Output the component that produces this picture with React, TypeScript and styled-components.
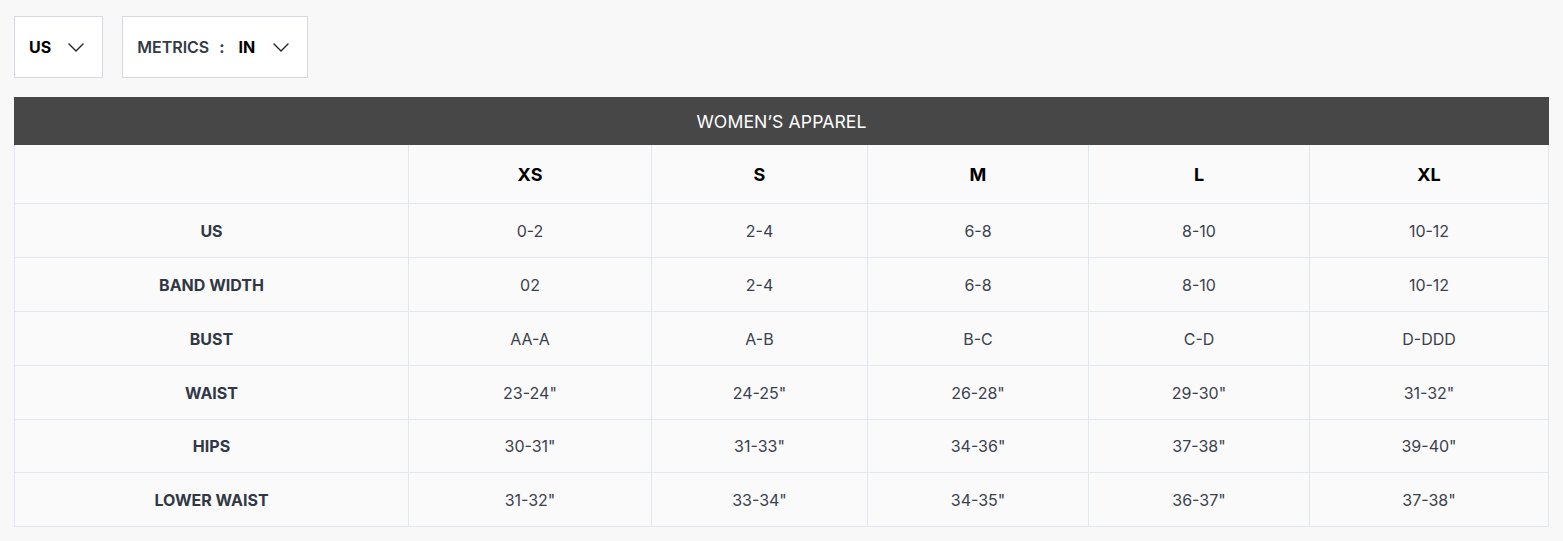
import React from "react";
import styled, { createGlobalStyle } from "styled-components";

const Global = createGlobalStyle`
  html, body { margin: 0; padding: 0; background: #f8f8f8; }
  body { font-family: Inter, "Noto Sans", sans-serif; }
`;

const Page = styled.div`
  padding: 16px 14px 14px 14px;
  display: flex;
  flex-direction: column;
  gap: 19px;
`;

const Controls = styled.div`
  display: flex;
  gap: 19px;
`;

const Select = styled.div<{ $pl: number }>`
  height: 62px;
  box-sizing: border-box;
  border: 1px solid #d6d9e0;
  background: #ffffff;
  display: flex;
  align-items: center;
  padding: 0 18px 0 ${(p) => p.$pl}px;
  font-weight: 700;
  font-size: 16px;
  color: #000;
`;

const Muted = styled.span`
  color: #333a44;
  font-weight: 600;
`;

const Colon = styled.span`
  color: #333a44;
  margin: 0 14px 0 10px;
`;

const Chevron = styled.svg<{ $ml: number }>`
  margin-left: ${(p) => p.$ml}px;
  width: 16px;
  height: 9px;
`;

const Table = styled.div`
  display: flex;
  flex-direction: column;
`;

const Title = styled.div`
  height: 48px;
  background: #474747;
  color: #ffffff;
  display: flex;
  align-items: center;
  justify-content: center;
  font-size: 17.6px;
  letter-spacing: 0.1px;
`;

const Grid = styled.div`
  display: grid;
  grid-template-columns: 394px 243px 216px 221px 221px 1fr;
  border-left: 1px solid #e2e6ee;
  background: #fafafb;
`;

const Cell = styled.div<{ $kind: "head" | "label" | "value"; $h: number }>`
  height: ${(p) => p.$h}px;
  box-sizing: border-box;
  border-right: 1px solid #e2e6ee;
  border-bottom: 1px solid #e2e6ee;
  display: flex;
  align-items: center;
  justify-content: center;
  font-size: ${(p) => (p.$kind === "head" ? "18px" : "16px")};
  font-weight: ${(p) => (p.$kind === "value" ? 400 : 700)};
  color: ${(p) => (p.$kind === "head" ? "#000000" : p.$kind === "label" ? "#313845" : "#3b414c")};
`;

const sizes = ["XS", "S", "M", "L", "XL"];
const rows: [string, string[]][] = [
  ["US", ["0-2", "2-4", "6-8", "8-10", "10-12"]],
  ["BAND WIDTH", ["02", "2-4", "6-8", "8-10", "10-12"]],
  ["BUST", ["AA-A", "A-B", "B-C", "C-D", "D-DDD"]],
  ["WAIST", ['23-24"', '24-25"', '26-28"', '29-30"', '31-32"']],
  ["HIPS", ['30-31"', '31-33"', '34-36"', '37-38"', '39-40"']],
  ["LOWER WAIST", ['31-32"', '33-34"', '34-35"', '36-37"', '37-38"']],
];
const rowH = [54, 54, 54, 54, 53, 54];

const Down = ({ ml }: { ml: number }) => (
  <Chevron $ml={ml} viewBox="0 0 16 9" fill="none">
    <path d="M1 1l7 7 7-7" stroke="#222" strokeWidth="1.4" strokeLinecap="round" strokeLinejoin="round" />
  </Chevron>
);

export default function App() {
  return (
    <>
      <Global />
      <Page>
        <Controls>
          <Select $pl={14}>
            US
            <Down ml={17} />
          </Select>
          <Select $pl={14}>
            <Muted>METRICS</Muted>
            <Colon>:</Colon>
            IN
            <Down ml={18} />
          </Select>
        </Controls>
        <Table>
          <Title>WOMEN’S APPAREL</Title>
          <Grid>
            <Cell $kind="head" $h={59} />
            {sizes.map((s) => (
              <Cell key={s} $kind="head" $h={59}>
                {s}
              </Cell>
            ))}
            {rows.map(([label, vals], i) => (
              <React.Fragment key={label}>
                <Cell $kind="label" $h={rowH[i]}>
                  {label}
                </Cell>
                {vals.map((v, j) => (
                  <Cell key={j} $kind="value" $h={rowH[i]}>
                    {v}
                  </Cell>
                ))}
              </React.Fragment>
            ))}
          </Grid>
        </Table>
      </Page>
    </>
  );
}
